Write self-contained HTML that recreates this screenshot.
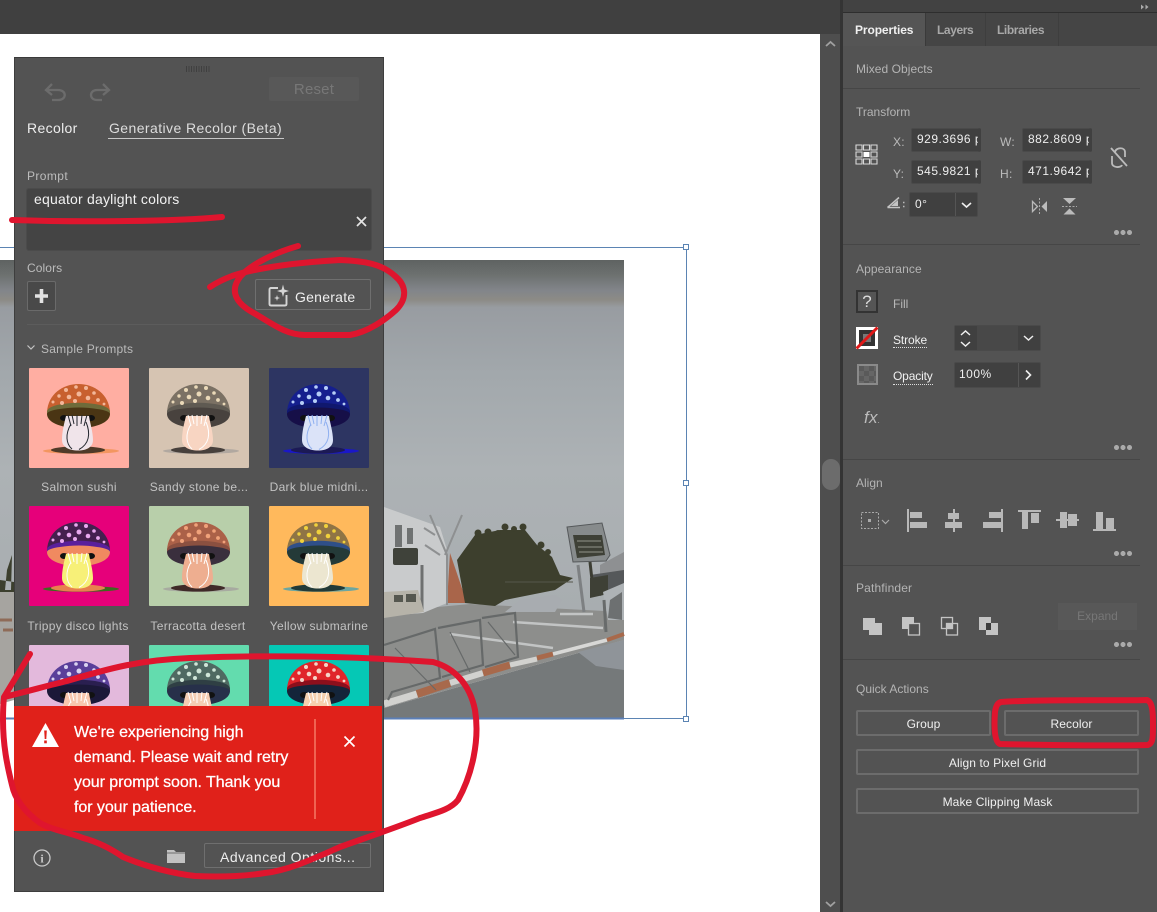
<!DOCTYPE html>
<html><head><meta charset="utf-8"><style>
html,body{margin:0;padding:0;background:#fff}
body{position:relative;width:1157px;height:912px;overflow:hidden;font-family:"Liberation Sans",sans-serif;font-size:12px;color:#c4c4c4}
.a{position:absolute}
.t{position:absolute;white-space:nowrap;line-height:16px;letter-spacing:.3px}
.h{color:#b4b4b4}
.ln{position:absolute;left:843px;width:297px;height:1px;background:#464646}
.in{position:absolute;background:#404040;border:1px solid #4a4a4a;box-sizing:border-box;color:#eee;line-height:21px;padding-left:5px;overflow:hidden;white-space:nowrap;letter-spacing:.5px;border-radius:2px}
.clip{border-right:3px solid #404040}
.btn{position:absolute;box-sizing:border-box;border:2px solid #6c6c6c;border-radius:2px;color:#f0f0f0;text-align:center;line-height:24px;letter-spacing:.1px}
.tile{position:absolute;width:100px;height:100px;border-radius:1px}
.lb{position:absolute;width:120px;text-align:center;color:#c2c2c2;line-height:16px;letter-spacing:.3px;white-space:nowrap}
.dots{position:absolute;width:18px;height:5px;background:radial-gradient(circle at 2.5px 2.5px,#aaa 2.4px,transparent 2.6px) 0 0/6.5px 5px repeat-x}
svg{position:absolute;overflow:visible}
</style></head><body>

<svg width="0" height="0" style="left:0;top:0"><defs>
<symbol id="m" viewBox="0 0 100 100">
<ellipse cx="52" cy="83" rx="38" ry="2.800" style="fill:var(--s)"/>
<ellipse cx="49" cy="82" rx="27" ry="3.600" style="fill:var(--r)"/>
<path d="M18 44C19 26 34 16 49.500 16C65 16 80 26 81 44C81 53 68 60 49.500 60C31 60 18 53 18 44Z" style="fill:var(--c)"/>
<path d="M18 44C18 41 21 39 28 37C42 34 58 34 71 37C78 39 81 41 81 44C81 53 68 60 49.500 60C31 60 18 53 18 44Z" style="fill:var(--b)"/>
<path d="M18 46C18 44 23 42 31 41C43 39 57 39 68 41C76 42 81 44 81 46C81 54 68 60 49.500 60C31 60 18 54 18 46Z" style="fill:var(--u)"/>
<ellipse cx="35" cy="50" rx="4" ry="3" fill="#111"/><ellipse cx="62" cy="50" rx="4" ry="3" fill="#111"/>
<path d="M37 48C35 56 33 64 33 72C33 79 40 82.500 49 82.500C58 82.500 64 79 64 72C64 64 61 55 60 48Z" style="fill:var(--t)"/>
<path d="M39 47L42 58M43 47L45 56M48 47L48 58M53 47L52 56M58 47L55 58M42 56C36 66 37 76 43 81M57 54C62 66 60 76 50 81.500" fill="none" style="stroke:var(--l)" stroke-width="1"/>
<g style="fill:var(--d)"><circle cx="37" cy="22" r="2"/><circle cx="47" cy="19" r="1.800"/><circle cx="57" cy="20" r="2"/><circle cx="65" cy="25" r="1.800"/><circle cx="30" cy="28" r="1.700"/><circle cx="40" cy="29" r="2.300"/><circle cx="50" cy="26" r="2.500"/><circle cx="59" cy="30" r="2.300"/><circle cx="69" cy="32" r="1.900"/><circle cx="24" cy="34" r="1.500"/><circle cx="33" cy="35" r="2"/><circle cx="46" cy="33" r="2"/><circle cx="75" cy="36" r="1.400"/></g>
</symbol>
</defs></svg>

<!-- top bar -->
<div class="a" style="left:0;top:0;width:840px;height:34px;background:#404040"></div>

<!-- photo -->
<svg style="left:0;top:0" width="840" height="912">
<defs><linearGradient id="sky" x1="0" y1="0" x2="0" y2="1">
<stop offset="0" stop-color="#5e6261"/><stop offset=".04" stop-color="#6d7170"/><stop offset=".08" stop-color="#82858a"/><stop offset=".105" stop-color="#8c8b86"/><stop offset=".125" stop-color="#989ca1"/><stop offset=".3" stop-color="#a2a8ac"/><stop offset=".55" stop-color="#adb2b5"/><stop offset="1" stop-color="#a7acaf"/></linearGradient></defs>
<rect x="0" y="260" width="624" height="380" fill="url(#sky)"/>
<path d="M0 590H14V700L0 704Z" fill="#a6a4a0"/>
<path d="M5 590L7 570L12 555L11 590Z M0 592L14 592L14 582L0 580Z" fill="#3c3f2e"/>
<path d="M0 620h12M3 630h10" stroke="#8f6b58" stroke-width="3"/>
<!-- background right -->
<path d="M600 565L624 552V590H600Z" fill="#8e9092"/>
<path d="M590 575L624 570V586L600 596Z" fill="#55585a"/>
<!-- ground -->
<path d="M384 612L470 604L624 612V640L384 708Z" fill="#8d8e8c"/>
<path d="M560 614H593M513 622L603 628M450 634L553 648" stroke="#c2c4c4" stroke-width="2.500" fill="none"/>
<path d="M384 708L624 640V718H384Z" fill="#75797a"/>
<path d="M578 652L624 640V670L596 666Z" fill="#8f9499"/>
<!-- curb -->
<path d="M384 704L417 694" stroke="#d2d2cf" stroke-width="7"/>
<path d="M417 694L450 683" stroke="#a8694b" stroke-width="8"/>
<path d="M450 683L483 673" stroke="#d2d2cf" stroke-width="6"/>
<path d="M483 673L510 665" stroke="#a8694b" stroke-width="7"/>
<path d="M510 665L537 659" stroke="#d2d2cf" stroke-width="5"/>
<path d="M537 658L553 654" stroke="#a8694b" stroke-width="5"/>
<path d="M553 654L607 640" stroke="#d8d8d6" stroke-width="3.500"/>
<path d="M607 640L624 634" stroke="#a8694b" stroke-width="4"/>
<!-- building -->
<path d="M384 507L440 527L447 550L447 603L423 613L384 616Z" fill="#c9cbcc"/>
<path d="M395 525h7v22h-7zM407 528h6v16h-6z" fill="#6f7272"/>
<rect x="393" y="548" width="25" height="17" rx="2" fill="#3f423a"/><path d="M422 565V610" stroke="#6e7070" stroke-width="3"/>
<path d="M384 592L418 590L424 612L384 618Z" fill="#b6b3a9"/><path d="M394 595h9v7h-9zM406 594h10v8h-10z" fill="#55574f"/>
<path d="M450 553L467 603H447Z" fill="#a9654a"/>
<path d="M430 515L447 555L447 605M462 515L445 555M440 555L425 545M435 535L424 528" stroke="#8e9091" stroke-width="2" fill="none"/>
<!-- bush -->
<g fill="#3d3f2d"><path d="M457 560L475 535L500 530L525 530L537 545L552 557L560 575L573 578L555 590L505 600L495 606L465 603Z"/><circle cx="478" cy="533" r="3.500"/><circle cx="488" cy="532" r="3.500"/><circle cx="498" cy="533" r="3"/><circle cx="505" cy="527" r="3.500"/><circle cx="514" cy="529" r="3"/><circle cx="523" cy="527" r="3.500"/><circle cx="541" cy="545" r="3.500"/><circle cx="548" cy="552" r="3"/></g>
<path d="M505 582H573" stroke="#55574a" stroke-width="1"/>
<path d="M505 612L520 600L555 595L562 600L555 612Z" fill="#a8acb0"/>
<!-- sign -->
<path d="M567 527L602 523L610 555L606 561L573 562Z" fill="#878b8c" stroke="#55585a"/>
<path d="M573 535L602 535L605 555L577 558Z" fill="#3e4036"/>
<path d="M577 541H601M578 547H602M579 552H603" stroke="#77796f" stroke-width="1.500"/>
<path d="M590 562L592 580" stroke="#3c3d33" stroke-width="3"/><path d="M578 565L584 612" stroke="#7d8082" stroke-width="3"/>
<path d="M590 578L608 575L608 594L590 598Z" fill="#3e4036"/>
<path d="M603 592L624 583V620L608 620Z" fill="#aeb3b6"/><path d="M610 600L622 592V620L608 618Z" fill="#6d7071"/>
<!-- fence -->
<g fill="none" stroke="#666969" stroke-width="2.200"><path d="M384 645L435 629L440 678L392 692L388 700M438 628L480 620L483 665L442 677M482 618L515 613L518 657L485 667"/><path d="M395 648L436 690M450 632L470 672M488 622L515 655"  stroke-width="1.200"/></g>
<path d="M604 600L606 632" stroke="#686b6b" stroke-width="3"/>
<!-- selection -->
<path d="M0 247.500H686.500V718.500H0" fill="none" stroke="#5b84b3" stroke-width="1"/>
<path d="M0 718.500H624" stroke="#5b7fb8" stroke-width="2"/>
<g fill="#fff" stroke="#5b84b3"><rect x="683.500" y="244.500" width="5" height="5"/><rect x="683.500" y="480.500" width="5" height="5"/><rect x="683.500" y="716.500" width="5" height="5"/></g>
</svg>

<!-- scrollbar + right panel -->
<div class="a" style="left:820px;top:34px;width:20px;height:878px;background:#4e4e4e"></div>
<div class="a" style="left:840px;top:0;width:3px;height:912px;background:#343434"></div>
<div class="a" style="left:822px;top:459px;width:18px;height:31px;border-radius:9px;background:#6c6c6c"></div>
<svg style="left:820px;top:34px" width="20" height="878"><path d="M6 12L10.500 8L15 12M6 868L10.500 872L15 868" fill="none" stroke="#a0a0a0" stroke-width="1.800"/></svg>
<div class="a" style="left:843px;top:0;width:314px;height:912px;background:#535353"></div>
<div class="a" style="left:843px;top:0;width:314px;height:12px;background:#424242"></div>
<div class="a" style="left:843px;top:12px;width:314px;height:1px;background:#2e2e2e"></div>
<div class="a" style="left:843px;top:13px;width:314px;height:33px;background:#454545"></div>
<div class="a" style="left:843px;top:13px;width:83px;height:33px;background:#555"></div>
<div class="a" style="left:925px;top:13px;width:1px;height:33px;background:#3a3a3a"></div>
<div class="a" style="left:985px;top:13px;width:1px;height:33px;background:#3e3e3e"></div>
<div class="a" style="left:1058px;top:13px;width:1px;height:33px;background:#3e3e3e"></div>
<svg style="left:1140px;top:3px" width="10" height="8"><path d="M1 1.500L4 4L1 6.500ZM5.500 1.500L8.500 4L5.500 6.500Z" fill="#aaa"/></svg>
<div class="t" style="left:855px;top:22px;color:#f0f0f0;font-weight:bold;letter-spacing:-.1px">Properties</div>
<div class="t" style="left:937px;top:22px;color:#a8a8a8;font-weight:bold;letter-spacing:-.4px">Layers</div>
<div class="t" style="left:997px;top:22px;color:#a8a8a8;font-weight:bold;letter-spacing:-.4px">Libraries</div>

<div class="t h" style="left:856px;top:61px;letter-spacing:.05px">Mixed Objects</div><div class="ln" style="top:88px"></div>
<div class="t h" style="left:856px;top:104px;letter-spacing:0">Transform</div>
<div class="t" style="left:893px;top:134px;color:#bbb">X:</div><div class="t" style="left:1000px;top:134px;color:#bbb">W:</div>
<div class="t" style="left:893px;top:166px;color:#bbb">Y:</div><div class="t" style="left:1000px;top:166px;color:#bbb">H:</div>
<div class="in clip" style="left:911px;top:128px;width:70px;height:24px">929.3696 p</div>
<div class="in clip" style="left:1022px;top:128px;width:70px;height:24px">882.8609 p</div>
<div class="in clip" style="left:911px;top:160px;width:70px;height:24px">545.9821 p</div>
<div class="in clip" style="left:1022px;top:160px;width:70px;height:24px">471.9642 p</div>
<div class="in" style="left:909px;top:192px;width:69px;height:25px;line-height:23px">0°</div>
<div class="a" style="left:955px;top:193px;width:1px;height:23px;background:#555"></div>
<svg style="left:840px;top:130px" width="317" height="100" fill="none" stroke="#d8d8d8">
<g stroke-width="1.100"><path d="M16 15h6v5h-6zM23.500 15h6v5h-6zM31 15h6v5h-6zM16 22h6v5h-6zM31 22h6v5h-6zM16 29h6v5h-6zM23.500 29h6v5h-6zM31 29h6v5h-6z"/></g><rect x="23.500" y="22" width="6" height="5" fill="#fff" stroke="none"/>
<path d="M271 18L287 36M275 22C276 17 285 17 285 22V27M272 26V33C272 38 281 38 282 35" stroke="#bbb" stroke-width="1.800"/>
<!-- angle -->
<path d="M47.500 77.500L59 67.500M47.500 77.500H60" stroke="#c4c4c4" stroke-width="1.500"/><path d="M51 76L58 70V76Z" fill="#c4c4c4" stroke="none"/>
<path d="M63 72.500h1.500M63 76.500h1.500" stroke="#bbb" stroke-width="1.500"/>
<!-- flip h -->
<path d="M192.500 71.500L197.500 76.500L192.500 81.500Z" stroke="#bbb" stroke-width="1.300"/><path d="M207 71V82L201.500 76.500Z" fill="#bbb" stroke="none"/><path d="M199.500 68V85" stroke="#aaa" stroke-dasharray="2 1.500"/>
<!-- flip v -->
<path d="M223 68H236L229.500 74Z" fill="#bbb" stroke="none"/><path d="M223.500 84.500H235.500L229.500 78.500Z" fill="#bbb" stroke="none"/><path d="M222 76.500H237" stroke="#aaa" stroke-dasharray="2 1.500"/>
</svg>
<svg style="left:955px;top:193px" width="24" height="23"><path d="M7 10L11.500 14L16 10" fill="none" stroke="#eee" stroke-width="1.600"/></svg>
<div class="dots" style="left:1114px;top:230px"></div>
<div class="ln" style="top:244px"></div>

<div class="t h" style="left:856px;top:261px;letter-spacing:.1px">Appearance</div>
<div class="a" style="left:856px;top:290px;width:22px;height:23px;box-sizing:border-box;border:2px solid #333;background:#555;color:#ddd;font-size:17px;line-height:19px;text-align:center">?</div>
<div class="t" style="left:893px;top:296px;color:#b8b8b8;letter-spacing:0">Fill</div>
<svg style="left:856px;top:327px" width="23" height="23"><rect width="22" height="22" fill="#fff"/><rect x="3" y="3" width="16" height="16" fill="#333"/><rect x="7" y="7" width="8" height="8" fill="#777"/><path d="M0.500 21.500L21.500 0.500" stroke="#e01818" stroke-width="3"/></svg>
<div class="t" style="left:893px;top:333px;color:#f0f0f0;letter-spacing:-.1px;border-bottom:1px dotted #ddd;line-height:14px">Stroke</div>
<div class="in" style="left:954px;top:325px;width:87px;height:26px;background:#484848"></div>
<div class="a" style="left:955px;top:326px;width:22px;height:24px;background:#404040"></div><div class="a" style="left:1018px;top:326px;width:22px;height:24px;background:#404040"></div>
<svg style="left:954px;top:325px" width="87" height="26" fill="none" stroke="#eee" stroke-width="1.500"><path d="M7 10L11.500 6L16 10M7 17L11.500 21L16 17M70 11L74.500 15L79 11"/></svg>
<div class="a" style="left:857px;top:364px;width:21px;height:21px;box-sizing:border-box;border:2px solid #8a8a8a;background:repeating-conic-gradient(#666 0 25%,#5a5a5a 0 50%) 0 0/10px 10px"></div>
<div class="t" style="left:893px;top:369px;color:#f0f0f0;letter-spacing:-.15px;border-bottom:1px dotted #ddd;line-height:15px">Opacity</div>
<div class="in" style="left:954px;top:362px;width:87px;height:26px;line-height:22px;padding-left:4px">100%</div>
<div class="a" style="left:1018px;top:363px;width:1px;height:24px;background:#555"></div>
<svg style="left:1019px;top:363px" width="20" height="24"><path d="M7 7.500L11.500 12L7 16.500" fill="none" stroke="#eee" stroke-width="1.600"/></svg>
<div class="t" style="left:864px;top:410px;color:#bbb;font-style:italic;font-size:17px">fx<span style="font-size:8px">.</span></div>
<div class="dots" style="left:1114px;top:445px"></div>
<div class="ln" style="top:459px"></div>

<div class="t h" style="left:856px;top:475px;letter-spacing:0">Align</div>
<svg style="left:856px;top:505px" width="290" height="32" fill="#b8b8b8">
<rect x="5.500" y="7.500" width="17" height="16" fill="none" stroke="#aaa" stroke-dasharray="2 1.500"/><rect x="12" y="14" width="3" height="3" fill="#aaa"/><path d="M26 15L29.500 18.500L33 15" fill="none" stroke="#aaa" stroke-width="1.200"/>
<path d="M51 4h2v23h-2zM54 7h12v6h-12zM54 17h17v6h-17z"/>
<path d="M97 4h2v23h-2zM92 8h11v6H92zM89 17h17v6H89z"/>
<path d="M145 4h2v23h-2zM133 7h12v6h-12zM127 17h18v6h-18z"/>
<path d="M162 5h23v2h-23zM166 7h6v17h-6zM175 8h8v10h-8z"/>
<path d="M200 14h23v2h-23zM204 7h7v16h-7zM212 9h9v12h-9z"/>
<path d="M237 24h23v2h-23zM240 7h7v17h-7zM250 13h8v11h-8z"/>
</svg>
<div class="dots" style="left:1114px;top:551px"></div>
<div class="ln" style="top:565px"></div>

<div class="t h" style="left:856px;top:580px;letter-spacing:.15px">Pathfinder</div>
<svg style="left:856px;top:610px" width="150" height="30" fill="#c4c4c4">
<path d="M7 8h12v5h7v12H13v-5H7z"/>
<path d="M46 7h12v6h-5v6h-7z"/><rect x="52.500" y="13.500" width="11" height="11.500" fill="none" stroke="#c4c4c4" stroke-width="1.300"/>
<rect x="85.500" y="7.500" width="11" height="11" fill="none" stroke="#c4c4c4" stroke-width="1.300"/><rect x="90.500" y="13.500" width="11" height="11.500" fill="none" stroke="#c4c4c4" stroke-width="1.300"/><rect x="90.500" y="13.500" width="6" height="5"/>
<path d="M123 7h12v6h7v12h-12v-5h-7z"/><rect x="130" y="13" width="5" height="7" fill="#3c3c3c"/>
</svg>
<div class="a" style="left:1058px;top:603px;width:79px;height:27px;background:#585858;color:#777;text-align:center;line-height:27px">Expand</div>
<div class="dots" style="left:1114px;top:642px"></div>
<div class="ln" style="top:659px"></div>

<div class="t h" style="left:856px;top:681px;letter-spacing:0">Quick Actions</div>
<div class="btn" style="left:856px;top:710px;width:135px;height:26px">Group</div>
<div class="btn" style="left:1004px;top:710px;width:135px;height:26px">Recolor</div>
<div class="btn" style="left:856px;top:749px;width:283px;height:26px">Align to Pixel Grid</div>
<div class="btn" style="left:856px;top:788px;width:283px;height:26px">Make Clipping Mask</div>

<!-- floating panel -->
<div class="a" style="left:14px;top:57px;width:370px;height:835px;background:#535353;box-shadow:inset 0 1px 0 #3a3a3a,inset 1px 0 0 #3e3e3e,inset -1px 0 0 #3e3e3e,inset 0 -1px 0 #3e3e3e"></div>
<div class="a" style="left:186px;top:66px;width:25px;height:6px;background:repeating-linear-gradient(90deg,#3f3f3f 0 1px,transparent 1px 2.500px)"></div>
<svg style="left:40px;top:80px" width="75" height="24" fill="none" stroke="#6c6c6c" stroke-width="2.300"><path d="M12 4L6 10L12 15M6 10H18C27 10 27 20 18 20H12"/><path d="M63 4L69 10L63 15M69 10H57C49 10 49 20 57 20H62"/></svg>
<div class="a" style="left:269px;top:77px;width:90px;height:24px;background:#585858;border-radius:2px;color:#777;font-size:15px;line-height:25px;text-align:center;letter-spacing:.2px">Reset</div>
<div class="t" style="left:27px;top:120px;font-size:14px;color:#eee;letter-spacing:.35px">Recolor</div>
<div class="t" style="left:109px;top:120px;font-size:14px;color:#ddd;letter-spacing:.42px">Generative Recolor (Beta)</div>
<div class="a" style="left:108px;top:138px;width:176px;height:1px;background:#c8c8c8"></div>
<div class="t" style="left:27px;top:168px;color:#bcbcbc;letter-spacing:.4px">Prompt</div>
<div class="a" style="left:27px;top:189px;width:344px;height:61px;background:#444;border-radius:2px;box-shadow:0 0 0 1px #4b4b4b"></div>
<div class="t" style="left:34px;top:191px;font-size:14px;color:#f2f2f2;letter-spacing:.2px">equator daylight colors</div>
<svg style="left:355px;top:215px" width="13" height="13"><path d="M2 2L11 11M11 2L2 11" stroke="#e4e4e4" stroke-width="1.700"/></svg>
<div class="t" style="left:27px;top:260px;color:#bcbcbc;letter-spacing:.1px">Colors</div>
<div class="a" style="left:27px;top:281px;width:29px;height:30px;box-sizing:border-box;border:1px solid #6a6a6a;background:#494949;border-radius:2px"></div>
<svg style="left:27px;top:281px" width="29" height="30"><path d="M14.500 8V22M8 15H21" stroke="#e2e2e2" stroke-width="3.600"/></svg>
<div class="a" style="left:255px;top:279px;width:116px;height:31px;box-sizing:border-box;border:1px solid #6f6f6f;border-radius:2px"></div>
<svg style="left:268px;top:284px" width="22" height="22" fill="none" stroke="#d4d4d4" stroke-width="1.900"><path d="M10 4H3C2 4 1.500 4.500 1.500 5.500V20C1.500 21 2 21.500 3 21.500H17C18 21.500 18.500 21 18.500 20V11"/><path d="M15 0.500L16.300 5.500L21 7L16.300 8.500L15 13L13.700 8.500L9 7L13.700 5.500Z" fill="#d4d4d4" stroke="none"/><path d="M9 11L9.700 13.300L12 14L9.700 14.700L9 17L8.300 14.700L6 14L8.300 13.300Z" fill="#d4d4d4" stroke="none"/></svg>
<div class="t" style="left:295px;top:289px;font-size:14px;color:#eee;letter-spacing:.25px">Generate</div>
<div class="a" style="left:27px;top:324px;width:344px;height:1px;background:#5c5c5c"></div>
<svg style="left:26px;top:344px" width="11" height="8"><path d="M1.500 1.500L5 5L8.500 1.500" fill="none" stroke="#c4c4c4" stroke-width="1.200"/></svg>
<div class="t" style="left:41px;top:341px;color:#bbb;letter-spacing:.25px">Sample Prompts</div>

<!-- tiles -->
<div class="tile" style="left:29px;top:368px;background:#ffaea2"><svg width="100" height="100" style="--c:#c8602f;--d:#f2b79a;--b:#6e6b3a;--u:#4a3514;--t:#f0e4ea;--l:#22262e;--s:#f39660;--r:#4f3a28"><use href="#m"/></svg></div>
<div class="tile" style="left:149px;top:368px;background:#d6c4b2"><svg width="100" height="100" style="--c:#7b7164;--d:#ead9b8;--b:#5f5a52;--u:#48423e;--t:#f8d5c2;--l:#fff;--s:#b1a8a0;--r:#47403c"><use href="#m"/></svg></div>
<div class="tile" style="left:269px;top:368px;background:#2d3562"><svg width="100" height="100" style="--c:#151f8e;--d:#b6cdf6;--b:#10186e;--u:#160f48;--t:#dbe3f8;--l:#8fb0f0;--s:#1a17c9;--r:#1c1a55"><use href="#m"/></svg></div>
<div class="tile" style="left:29px;top:506px;background:#e6007a"><svg width="100" height="100" style="--c:#45204f;--d:#e9a9f0;--b:#5a1f9c;--u:#f08a60;--t:#f7f078;--l:#fff;--s:#3e6a1e;--r:#e8804e"><use href="#m"/></svg></div>
<div class="tile" style="left:149px;top:506px;background:#b8cfaa"><svg width="100" height="100" style="--c:#ab6148;--d:#f0a27a;--b:#8b5040;--u:#3a2f3d;--t:#eeae90;--l:#fff;--s:#a7aaa0;--r:#3f2a28"><use href="#m"/></svg></div>
<div class="tile" style="left:269px;top:506px;background:#ffb95c"><svg width="100" height="100" style="--c:#8f7445;--d:#f0d13c;--b:#2f4f88;--u:#243a38;--t:#ece6d0;--l:#fff;--s:#6ca6a0;--r:#223a38"><use href="#m"/></svg></div>
<div class="tile" style="left:29px;top:645px;background:#e3b9dc"><svg width="100" height="100" style="--c:#5a3f9a;--d:#d9d3f0;--b:#2a1f50;--u:#1b1838;--t:#f8c6ae;--l:#fff;--s:#a7aaa0;--r:#333"><use href="#m"/></svg></div>
<div class="tile" style="left:149px;top:645px;background:#63dcae"><svg width="100" height="100" style="--c:#4f6a62;--d:#cfe6d8;--b:#2f3f44;--u:#27304a;--t:#f4cdb4;--l:#fff;--s:#a7aaa0;--r:#333"><use href="#m"/></svg></div>
<div class="tile" style="left:269px;top:645px;background:#05c8b5"><svg width="100" height="100" style="--c:#e0252a;--d:#f5d4c8;--b:#8c0f1c;--u:#14253a;--t:#f6d0ae;--l:#fff;--s:#a7aaa0;--r:#333"><use href="#m"/></svg></div>
<div class="lb" style="left:19px;top:479px">Salmon sushi</div>
<div class="lb" style="left:139px;top:479px">Sandy stone be...</div>
<div class="lb" style="left:259px;top:479px">Dark blue midni...</div>
<div class="lb" style="left:18px;top:618px">Trippy disco lights</div>
<div class="lb" style="left:138px;top:618px">Terracotta desert</div>
<div class="lb" style="left:259px;top:618px">Yellow submarine</div>

<!-- alert -->
<div class="a" style="left:14px;top:706px;width:368px;height:125px;background:#e0211a"></div>
<svg style="left:32px;top:722px" width="28" height="26"><path d="M13.500 1L27 25H0Z" fill="#fff"/><path d="M12.200 8.500H14.800L14.300 17H12.700Z" fill="#e0211a"/><rect x="12.200" y="18.500" width="2.600" height="2.800" fill="#e0211a"/></svg>
<div class="a" style="left:74px;top:720px;font-size:16px;line-height:25px;color:#fff;white-space:nowrap;letter-spacing:-.06px;-webkit-text-stroke:.25px #fff">We're experiencing high<br>demand. Please wait and retry<br>your prompt soon. Thank you<br>for your patience.</div>
<div class="a" style="left:314px;top:719px;width:2px;height:100px;background:#f06352"></div>
<svg style="left:343px;top:735px" width="13" height="13"><path d="M1.500 1.500L11.500 11.500M11.500 1.500L1.500 11.500" stroke="#fff" stroke-width="1.700"/></svg>

<!-- footer -->
<svg style="left:33px;top:849px" width="19" height="19"><circle cx="9" cy="9" r="8" fill="none" stroke="#c8c8c8" stroke-width="1.300"/><text x="9" y="13.500" text-anchor="middle" font-family="Liberation Serif,serif" font-weight="bold" font-size="12" fill="#c8c8c8">i</text></svg>
<svg style="left:167px;top:848px" width="19" height="15"><path d="M0 2H7L9 4H18V15H0Z" fill="#c2c2c2"/><path d="M0 5H18" stroke="#535353" stroke-width=".8"/></svg>
<div class="a" style="left:204px;top:843px;width:167px;height:25px;box-sizing:border-box;border:1px solid #6f6f6f;border-radius:2px"></div>
<div class="t" style="left:220px;top:849px;font-size:14px;color:#eee;letter-spacing:.5px">Advanced Options...</div>

<!-- red annotations -->
<svg style="left:0;top:0" width="1157" height="912" fill="none" stroke="#df152e" stroke-width="6" stroke-linecap="round" stroke-linejoin="round">
<path d="M12 220C70 222 170 222 222 217"/>
<path d="M298 246C270 254 245 268 238 280C230 293 238 304 252 312C270 322 285 335 305 335H350C368 332 385 320 396 310C408 298 406 285 395 276C382 264 365 261 340 260C300 262 255 268 232 276C224 279 216 283 210 287"/>
<path d="M30 654L4 697C25 692 50 685 67 681C110 668 140 660 190 658C240 656 290 656 333 657C370 658 405 660 433 662C455 668 470 685 475 710C480 740 472 775 458 800C450 810 435 813 420 818C395 828 365 838 340 847C315 858 290 870 265 873C240 877 215 877 195 876C170 873 145 866 123 857C110 848 98 842 83 838C68 832 52 830 40 823C25 812 15 800 12 785C7 765 3 745 3 720Q3 705 4 697"/>
<path d="M1001 702C1040 699 1110 701 1147 700C1153 702 1153 715 1153 725C1153 738 1153 743 1148 745C1110 746 1040 745 1000 744C994 742 994 725 995 712C996 705 998 703 1001 702Z"/>
</svg>
</body></html>
